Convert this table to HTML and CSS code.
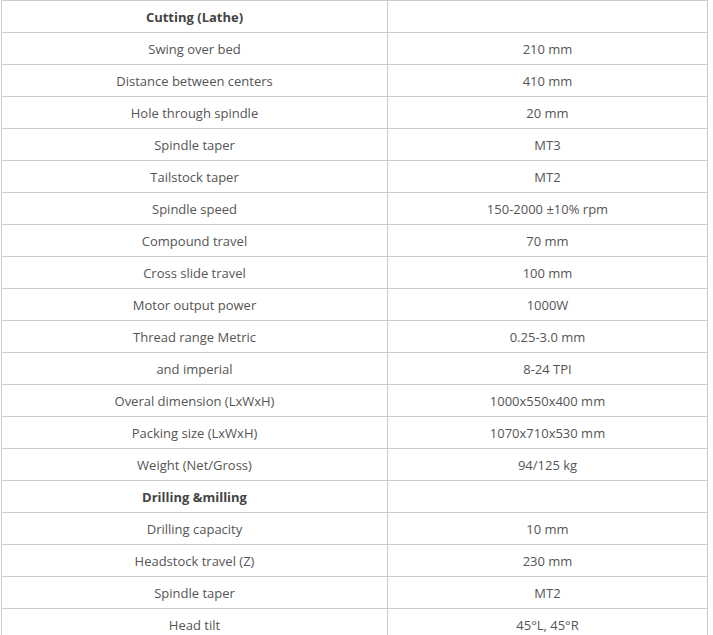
FILE: index.html
```html
<!DOCTYPE html>
<html>
<head>
<meta charset="utf-8">
<link rel="stylesheet" href="styles.css">
</head>
<body>
<table class="spec">
<colgroup><col class="c1"><col class="c2"></colgroup>
<tbody>
<tr class="head"><td>Cutting (Lathe)</td><td></td></tr>
<tr><td>Swing over bed</td><td>210 mm</td></tr>
<tr><td>Distance between centers</td><td>410 mm</td></tr>
<tr><td>Hole through spindle</td><td>20 mm</td></tr>
<tr><td>Spindle taper</td><td>MT3</td></tr>
<tr><td>Tailstock taper</td><td>MT2</td></tr>
<tr><td>Spindle speed</td><td>150-2000 ±10% rpm</td></tr>
<tr><td>Compound travel</td><td>70 mm</td></tr>
<tr><td>Cross slide travel</td><td>100 mm</td></tr>
<tr><td>Motor output power</td><td>1000W</td></tr>
<tr><td>Thread range Metric</td><td>0.25-3.0 mm</td></tr>
<tr><td>and imperial</td><td>8-24 TPI</td></tr>
<tr><td>Overal dimension (LxWxH)</td><td>1000x550x400 mm</td></tr>
<tr><td>Packing size (LxWxH)</td><td>1070x710x530 mm</td></tr>
<tr><td>Weight (Net/Gross)</td><td>94/125 kg</td></tr>
<tr class="head"><td>Drilling &amp;milling</td><td></td></tr>
<tr><td>Drilling capacity</td><td>10 mm</td></tr>
<tr><td>Headstock travel (Z)</td><td>230 mm</td></tr>
<tr><td>Spindle taper</td><td>MT2</td></tr>
<tr><td>Head tilt</td><td>45°L, 45°R</td></tr>
</tbody>
</table>
</body>
</html>
```
FILE: styles.css
```css
html, body {
  margin: 0;
  padding: 0;
  background: #fff;
}
body {
  padding-left: 1px;
  font-family: "Open Sans", "DejaVu Sans", sans-serif;
  font-size: 13px;
  color: #555;
}
.spec {
  border-collapse: collapse;
  table-layout: fixed;
  width: 707px;
  border: 1px solid #ccc;
}
.c1 { width: 386px; }
.c2 { width: 320px; }
.spec td {
  border: 1px solid #ccc;
  height: 31px;
  padding: 0;
  text-align: center;
  vertical-align: middle;
  line-height: 18px;
}
.head td {
  font-weight: bold;
  color: #444;
}
```
